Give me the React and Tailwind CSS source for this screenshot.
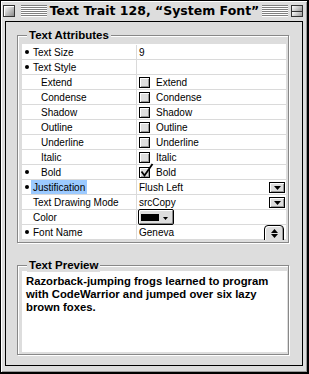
import React from "react";

const sans = "font-['Liberation_Sans',Arial,sans-serif]";

const Stripes = () => (
  <div className="flex-1 h-[12px] bg-[repeating-linear-gradient(to_bottom,#808080_0px,#808080_1px,#ffffff_1px,#ffffff_2px)]" />
);

const Down = ({ w = 7, h = 4 }) => (
  <svg width={w} height={h} viewBox={`0 0 ${w} ${h}`}>
    <path d={`M0 0H${w}L${w / 2} ${h}Z`} fill="black" />
  </svg>
);

const Up = ({ w = 7, h = 4 }) => (
  <svg width={w} height={h} viewBox={`0 0 ${w} ${h}`}>
    <path d={`M0 ${h}H${w}L${w / 2} 0Z`} fill="black" />
  </svg>
);

const Checkbox = ({ checked, label }) => (
  <div className="flex items-start">
    <div className="relative mt-[2px] w-[11px] h-[11px] border border-black bg-[#dddddd] shadow-[inset_1px_1px_0_#fff,inset_-1px_-1px_0_#999]">
      {checked && (
        <svg className="absolute left-[0px] top-[-5px] overflow-visible" width="14" height="15" viewBox="0 0 14 15">
          <path d="M1.5 8.5 L4.5 12.5 L12.5 1" stroke="black" strokeWidth="1.8" fill="none" />
        </svg>
      )}
    </div>
    <span className="ml-[6px] block pt-[2px] leading-[12px]">{label}</span>
  </div>
);

const PopupArrow = () => (
  <div className="mt-[2px] mr-[1px] w-[16px] h-[11px] border border-black bg-[#dddddd] shadow-[inset_1px_1px_0_#fff,inset_-1px_-1px_0_#999] flex items-center justify-center">
    <Down />
  </div>
);

const rows = [
  { bullet: true, label: "Text Size", value: "9" },
  { bullet: true, label: "Text Style" },
  { indent: true, label: "Extend", check: "Extend" },
  { indent: true, label: "Condense", check: "Condense" },
  { indent: true, label: "Shadow", check: "Shadow" },
  { indent: true, label: "Outline", check: "Outline" },
  { indent: true, label: "Underline", check: "Underline" },
  { indent: true, label: "Italic", check: "Italic" },
  { bullet: true, indent: true, label: "Bold", check: "Bold", checked: true },
  { bullet: true, label: "Justification", value: "Flush Left", popup: true, highlight: true },
  { label: "Text Drawing Mode", value: "srcCopy", popup: true },
  { label: "Color", color: true },
  { bullet: true, label: "Font Name", value: "Geneva", arrows: true },
];

const Row = ({ row }) => (
  <div className="flex h-[15px] border-b border-[#dadada]">
    <div className="w-[115px] shrink-0 border-r border-[#dadada] flex items-start pl-[3px]">
      <span className={`mt-[5px] w-[4px] h-[4px] rounded-full ${row.bullet ? "bg-black" : ""}`} />
      <span
        className={`block h-[14px] pt-[2px] leading-[12px] whitespace-nowrap ${
          row.indent ? "ml-[12px]" : row.highlight ? "ml-[2px] px-[2px] bg-[#9ccaff]" : "ml-[4px]"
        }`}
      >
        {row.label}
      </span>
    </div>
    <div className="flex-1 flex items-start justify-between pl-[2px]">
      {row.value !== undefined && <span className="block pt-[2px] leading-[12px]">{row.value}</span>}
      {row.check && <Checkbox label={row.check} checked={row.checked} />}
      {row.color && (
        <div className="-ml-[1px] -mt-[1px] w-[36px] h-[16px] shrink-0 border border-black rounded-[2px] bg-[#dddddd] shadow-[inset_1px_1px_0_#fff,inset_-1px_-1px_0_#888] flex items-center pl-[2px] gap-[4px]">
          <div className="w-[18px] h-[7px] bg-black" />
          <div className="mt-[3px]">
            <Down w={5} h={3} />
          </div>
        </div>
      )}
      {row.popup && <PopupArrow />}
      {row.arrows && (
        <div className="mr-[2px] w-[20px] h-[18px] shrink-0 border border-black rounded-t-[4px] bg-[#dddddd] shadow-[inset_1px_1px_0_#fff,inset_-1px_0_0_#999] flex flex-col items-center pt-[3px] gap-[1px]">
          <Up />
          <Down />
        </div>
      )}
    </div>
  </div>
);

const Group = ({ title, className, children }) => (
  <div
    className={`relative ml-[11px] w-[272px] border border-[#888888] shadow-[1px_1px_0_#fff,inset_1px_1px_0_#fff] pl-[4px] pb-[2px] ${className}`}
  >
    <span className="absolute left-[9px] top-[-8px] px-[2px] bg-[#dddddd] font-bold text-[11.5px] leading-[14px]">
      {title}
    </span>
    {children}
  </div>
);

export default function App() {
  return (
    <div className={`w-[309px] h-[374px] border-l border-t border-r-2 border-b-2 border-black bg-[#dddddd] shadow-[inset_1px_1px_0_#fff,inset_-1px_-1px_0_#999] flex flex-col ${sans} text-black`}>
      {/* title bar */}
      <div className="h-[20px] flex items-center pl-[2px] pr-[4px]">
        <div className="w-[12px] h-[12px] border border-[#333] bg-[linear-gradient(135deg,#ffffff,#8a8a8a)] shadow-[inset_1px_1px_0_#fff]" />
        <div className="flex-1 flex items-center ml-[6px] mr-[3px]">
          <Stripes />
          <span className="px-[3px] font-['DejaVu_Sans',sans-serif] font-bold text-[12.5px] leading-[20px] whitespace-nowrap">
            Text Trait 128, “System Font”
          </span>
          <Stripes />
        </div>
        <div className="w-[12px] h-[12px] border border-[#333] bg-[#cccccc] flex flex-col">
          <div className="flex-1 border-b border-[#333] bg-[linear-gradient(135deg,#ffffff,#999)]" />
          <div className="flex-1 bg-[linear-gradient(135deg,#ffffff,#999)]" />
        </div>
      </div>

      {/* content */}
      <div className="ml-[4px] mr-[4px] h-[345px] border border-black bg-[#dddddd] pt-[13px] text-[10px]">
        <Group title="Text Attributes" className="pt-[8px]">
          <div className="w-[264px] bg-white pt-[1px] overflow-hidden">
            {rows.map((row, i) => (
              <Row key={i} row={row} />
            ))}
          </div>
        </Group>

        <Group title="Text Preview" className="mt-[22px] pt-[5px]">
          <div className="w-[265px] h-[81px] bg-white pl-[4px] pr-[4px] pt-[4px] font-bold text-[11.3px] leading-[13px]">
            Razorback-jumping frogs learned to program with CodeWarrior and jumped over six lazy brown foxes.
          </div>
        </Group>
      </div>
    </div>
  );
}
